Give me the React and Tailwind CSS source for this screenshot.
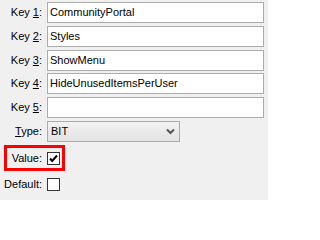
import React from 'react';

// Field rows in the key editor
const KEYS = [
  { n: '1', value: 'CommunityPortal', mt: 'mt-[2px]' },
  { n: '2', value: 'Styles', mt: 'mt-[3px]' },
  { n: '3', value: 'ShowMenu', mt: 'mt-[3px]' },
  { n: '4', value: 'HideUnusedItemsPerUser', mt: 'mt-[2px]' },
  { n: '5', value: '', mt: 'mt-[3px]' },
];

function Checkbox({ checked }) {
  return (
    <div className="w-[13px] h-[13px] border border-[#333333] bg-white flex items-center justify-center shrink-0">
      {checked && (
        <svg width="11" height="11" viewBox="0 0 11 11">
          <path d="M2 5.5 L4.2 8 L9 2.5" fill="none" stroke="#000" strokeWidth="2" />
        </svg>
      )}
    </div>
  );
}

export default function App() {
  return (
    <div
      className="w-[268px] h-[200px] bg-[#f0f0f0] text-[11px] text-black flex flex-col overflow-hidden"
      style={{ fontFamily: '"Liberation Sans", Arial, sans-serif' }}
    >
      {KEYS.map((k) => (
        <div key={k.n} className={`flex items-center h-[21px] ${k.mt}`}>
          <div className="w-[42px] text-right whitespace-nowrap">
            Key <u>{k.n}</u>:
          </div>
          <div className="ml-[5px] w-[217px] h-[21px] border border-[#acacac] bg-white pl-[2px] flex items-center">
            {k.value}
          </div>
        </div>
      ))}

      <div className="flex items-center h-[21px] mt-[3px]">
        <div className="w-[42px] text-right">
          <u>T</u>ype:
        </div>
        <div className="ml-[5px] w-[133px] h-[21px] border border-[#acacac] bg-gradient-to-b from-[#f2f2f2] to-[#e3e3e3] pl-[3px] pr-[4px] flex items-center justify-between">
          <span>BIT</span>
          <svg width="9" height="7" viewBox="0 0 9 7">
            <path d="M1 1.5 L4.5 5 L8 1.5" fill="none" stroke="#555" strokeWidth="2" />
          </svg>
        </div>
      </div>

      <div className="ml-[4px] mt-[3px] w-[61px] h-[26px] border-[3px] border-[#ff0000] flex items-center">
        <div className="w-[35px] text-right">Value:</div>
        <div className="ml-[5px] mt-[1px]">
          <Checkbox checked />
        </div>
      </div>

      <div className="flex items-center h-[20px] mt-[3px]">
        <div className="w-[42px] text-right">Default:</div>
        <div className="ml-[5px]">
          <Checkbox />
        </div>
      </div>
    </div>
  );
}
